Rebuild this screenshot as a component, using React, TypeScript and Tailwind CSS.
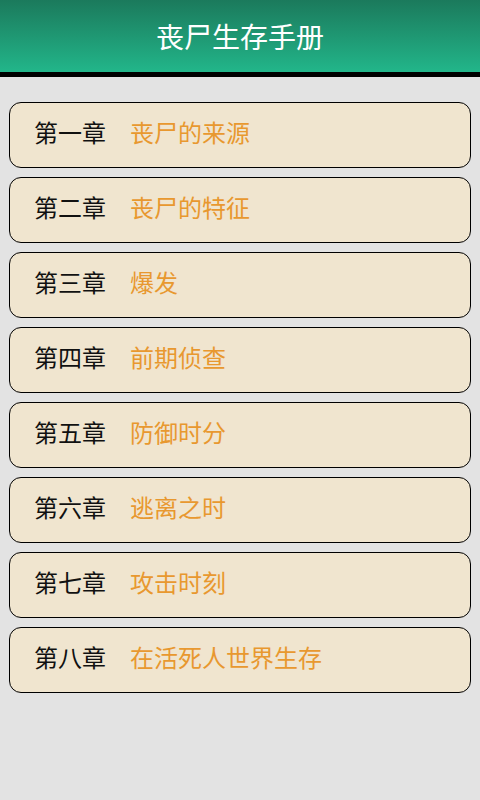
const chapters = [
  { no: "第一章", title: "丧尸的来源" },
  { no: "第二章", title: "丧尸的特征" },
  { no: "第三章", title: "爆发" },
  { no: "第四章", title: "前期侦查" },
  { no: "第五章", title: "防御时分" },
  { no: "第六章", title: "逃离之时" },
  { no: "第七章", title: "攻击时刻" },
  { no: "第八章", title: "在活死人世界生存" },
];

const font = {
  fontFamily: '"Noto Sans CJK SC", "Noto Sans", sans-serif',
};

export default function App() {
  return (
    <div className="w-[480px] h-[800px] bg-[#e3e3e3] flex flex-col" style={font}>
      <div className="h-[72px] shrink-0 flex items-center justify-center bg-gradient-to-b from-[#1b7a5c] to-[#22b68a]">
        <h1 className="text-[28px] leading-none text-white font-normal">丧尸生存手册</h1>
      </div>
      <div className="h-[5px] shrink-0 bg-black" />

      <div className="flex flex-col gap-[9px] pt-[25px] px-[9px]">
        {chapters.map((c) => (
          <div
            key={c.no}
            className="h-[66px] flex items-center pl-[24px] pb-[6px] border border-black rounded-[12px] bg-[#f0e5cf]"
          >
            <span className="text-[24px] leading-none text-[#111]">{c.no}</span>
            <span className="ml-[24px] text-[24px] leading-none text-[#e8982f]">{c.title}</span>
          </div>
        ))}
      </div>
    </div>
  );
}
